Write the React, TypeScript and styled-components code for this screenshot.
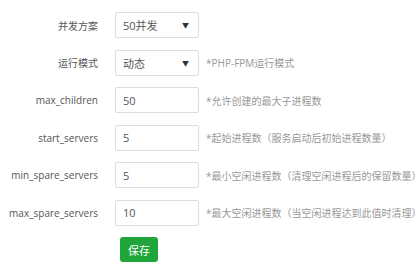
import React from "react";
import styled, { createGlobalStyle } from "styled-components";

const GlobalStyle = createGlobalStyle`
    html, body {
        margin: 0;
        padding: 0;
        background: #fff;
    }
    body {
        font-family: "Open Sans", "Noto Sans CJK SC", sans-serif;
        font-size: 10px;
        color: #555;
    }
`;

type Field = {
    label: string;
    value: string;
    select?: boolean;
    hint?: string;
};

const fields: Field[] = [
    { label: "并发方案", value: "50并发", select: true },
    { label: "运行模式", value: "动态", select: true, hint: "*PHP-FPM运行模式" },
    { label: "max_children", value: "50", hint: "*允许创建的最大子进程数" },
    { label: "start_servers", value: "5", hint: "*起始进程数（服务启动后初始进程数量）" },
    { label: "min_spare_servers", value: "5", hint: "*最小空闲进程数（清理空闲进程后的保留数量）" },
    { label: "max_spare_servers", value: "10", hint: "*最大空闲进程数（当空闲进程达到此值时清理）" },
];

const App = () => {
    return (
        <>
            <GlobalStyle />
            <Form>
                {fields.map((f) => (
                    <Row key={f.label}>
                        <Label>{f.label}</Label>
                        <Box>
                            <span>{f.value}</span>
                            {f.select && <Caret>▼</Caret>}
                        </Box>
                        {f.hint && <Hint>{f.hint}</Hint>}
                    </Row>
                ))}
                <Footer>
                    <SaveButton>保存</SaveButton>
                </Footer>
            </Form>
        </>
    );
};

export default App;

const Form = styled.div`
    display: flex;
    flex-direction: column;
    gap: 11.5px;
    padding-top: 12px;
    width: 420px;
`;

const Row = styled.div`
    display: flex;
    align-items: center;
    height: 26px;
`;

const Label = styled.div`
    flex-shrink: 0;
    width: 115px;
    padding-right: 17px;
    box-sizing: border-box;
    text-align: right;
    color: #555;
    white-space: nowrap;
`;

const Box = styled.div`
    flex-shrink: 0;
    width: 84px;
    height: 26px;
    box-sizing: border-box;
    border: 1px solid #ddd;
    border-radius: 2px;
    display: flex;
    align-items: center;
    justify-content: space-between;
    padding: 0 9px 0 7px;
    font-size: 11px;
    color: #555;
`;

const Caret = styled.span`
    font-size: 7px;
    color: #333;
`;

const Hint = styled.div`
    margin-left: 7px;
    color: #999;
    white-space: nowrap;
`;

const Footer = styled.div`
    padding-left: 120px;
`;

const SaveButton = styled.button`
    width: 38px;
    height: 25px;
    border: none;
    border-radius: 3px;
    background: #20a53a;
    color: #fff;
    font-family: "Open Sans", "Noto Sans CJK SC", sans-serif;
    font-size: 11px;
    padding: 0;
    cursor: pointer;
`;
